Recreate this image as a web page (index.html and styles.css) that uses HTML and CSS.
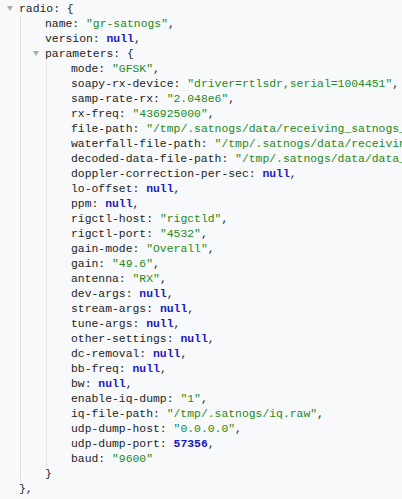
FILE: index.html
```html
<!DOCTYPE html>
<html>
<head>
<meta charset="utf-8">
<link rel="stylesheet" href="styles.css">
</head>
<body>
<div class="tree">
  <div class="line"><span class="tog"></span><span class="k">radio</span>: {</div>
  <div class="kids">
    <div class="line"><span class="k">name</span>: <span class="s">"gr-satnogs"</span>,</div>
    <div class="line"><span class="k">version</span>: <span class="n">null</span>,</div>
    <div class="line"><span class="tog"></span><span class="k">parameters</span>: {</div>
    <div class="kids">
      <div class="line">mode: <span class="s">"GFSK"</span>,</div>
      <div class="line">soapy-rx-device: <span class="s">"driver=rtlsdr,serial=1004451"</span>,</div>
      <div class="line">samp-rate-rx: <span class="s">"2.048e6"</span>,</div>
      <div class="line">rx-freq: <span class="s">"436925000"</span>,</div>
      <div class="line">file-path: <span class="s">"/tmp/.satnogs/data/receiving_satnogs_</span></div>
      <div class="line">waterfall-file-path: <span class="s">"/tmp/.satnogs/data/receiving_</span></div>
      <div class="line">decoded-data-file-path: <span class="s">"/tmp/.satnogs/data/data_</span></div>
      <div class="line">doppler-correction-per-sec: <span class="n">null</span>,</div>
      <div class="line">lo-offset: <span class="n">null</span>,</div>
      <div class="line">ppm: <span class="n">null</span>,</div>
      <div class="line">rigctl-host: <span class="s">"rigctld"</span>,</div>
      <div class="line">rigctl-port: <span class="s">"4532"</span>,</div>
      <div class="line">gain-mode: <span class="s">"Overall"</span>,</div>
      <div class="line">gain: <span class="s">"49.6"</span>,</div>
      <div class="line">antenna: <span class="s">"RX"</span>,</div>
      <div class="line">dev-args: <span class="n">null</span>,</div>
      <div class="line">stream-args: <span class="n">null</span>,</div>
      <div class="line">tune-args: <span class="n">null</span>,</div>
      <div class="line">other-settings: <span class="n">null</span>,</div>
      <div class="line">dc-removal: <span class="n">null</span>,</div>
      <div class="line">bb-freq: <span class="n">null</span>,</div>
      <div class="line">bw: <span class="n">null</span>,</div>
      <div class="line">enable-iq-dump: <span class="s">"1"</span>,</div>
      <div class="line">iq-file-path: <span class="s">"/tmp/.satnogs/iq.raw"</span>,</div>
      <div class="line">udp-dump-host: <span class="s">"0.0.0.0"</span>,</div>
      <div class="line">udp-dump-port: <span class="n">57356</span>,</div>
      <div class="line">baud: <span class="s">"9600"</span></div>
    </div>
    <div class="line">}</div>
  </div>
  <div class="line">},</div>
</div>
</body>
</html>
```

FILE: styles.css
```css
html, body {
  margin: 0;
  padding: 0;
  background: #f8f9fa;
}
body {
  font-family: "Liberation Mono", monospace;
  font-size: 11.4px;
  color: #222427;
  overflow: hidden;
}
.tree {
  padding: 2px 0 0 19px;
}
.line {
  height: 15px;
  line-height: 15px;
  white-space: pre;
}
.kids {
  margin-left: 1px;
  padding-left: 24px;
  border-left: 1px dotted #c8cacc;
}
.tog {
  display: inline-block;
  width: 0;
  height: 0;
  margin-left: -12px;
  margin-right: 6px;
  border-left: 3px solid transparent;
  border-right: 3px solid transparent;
  border-top: 5px solid #a9abad;
  vertical-align: 1px;
}
.s {
  color: #238a23;
}
.n {
  color: #1a1ac0;
  font-weight: bold;
}
```
